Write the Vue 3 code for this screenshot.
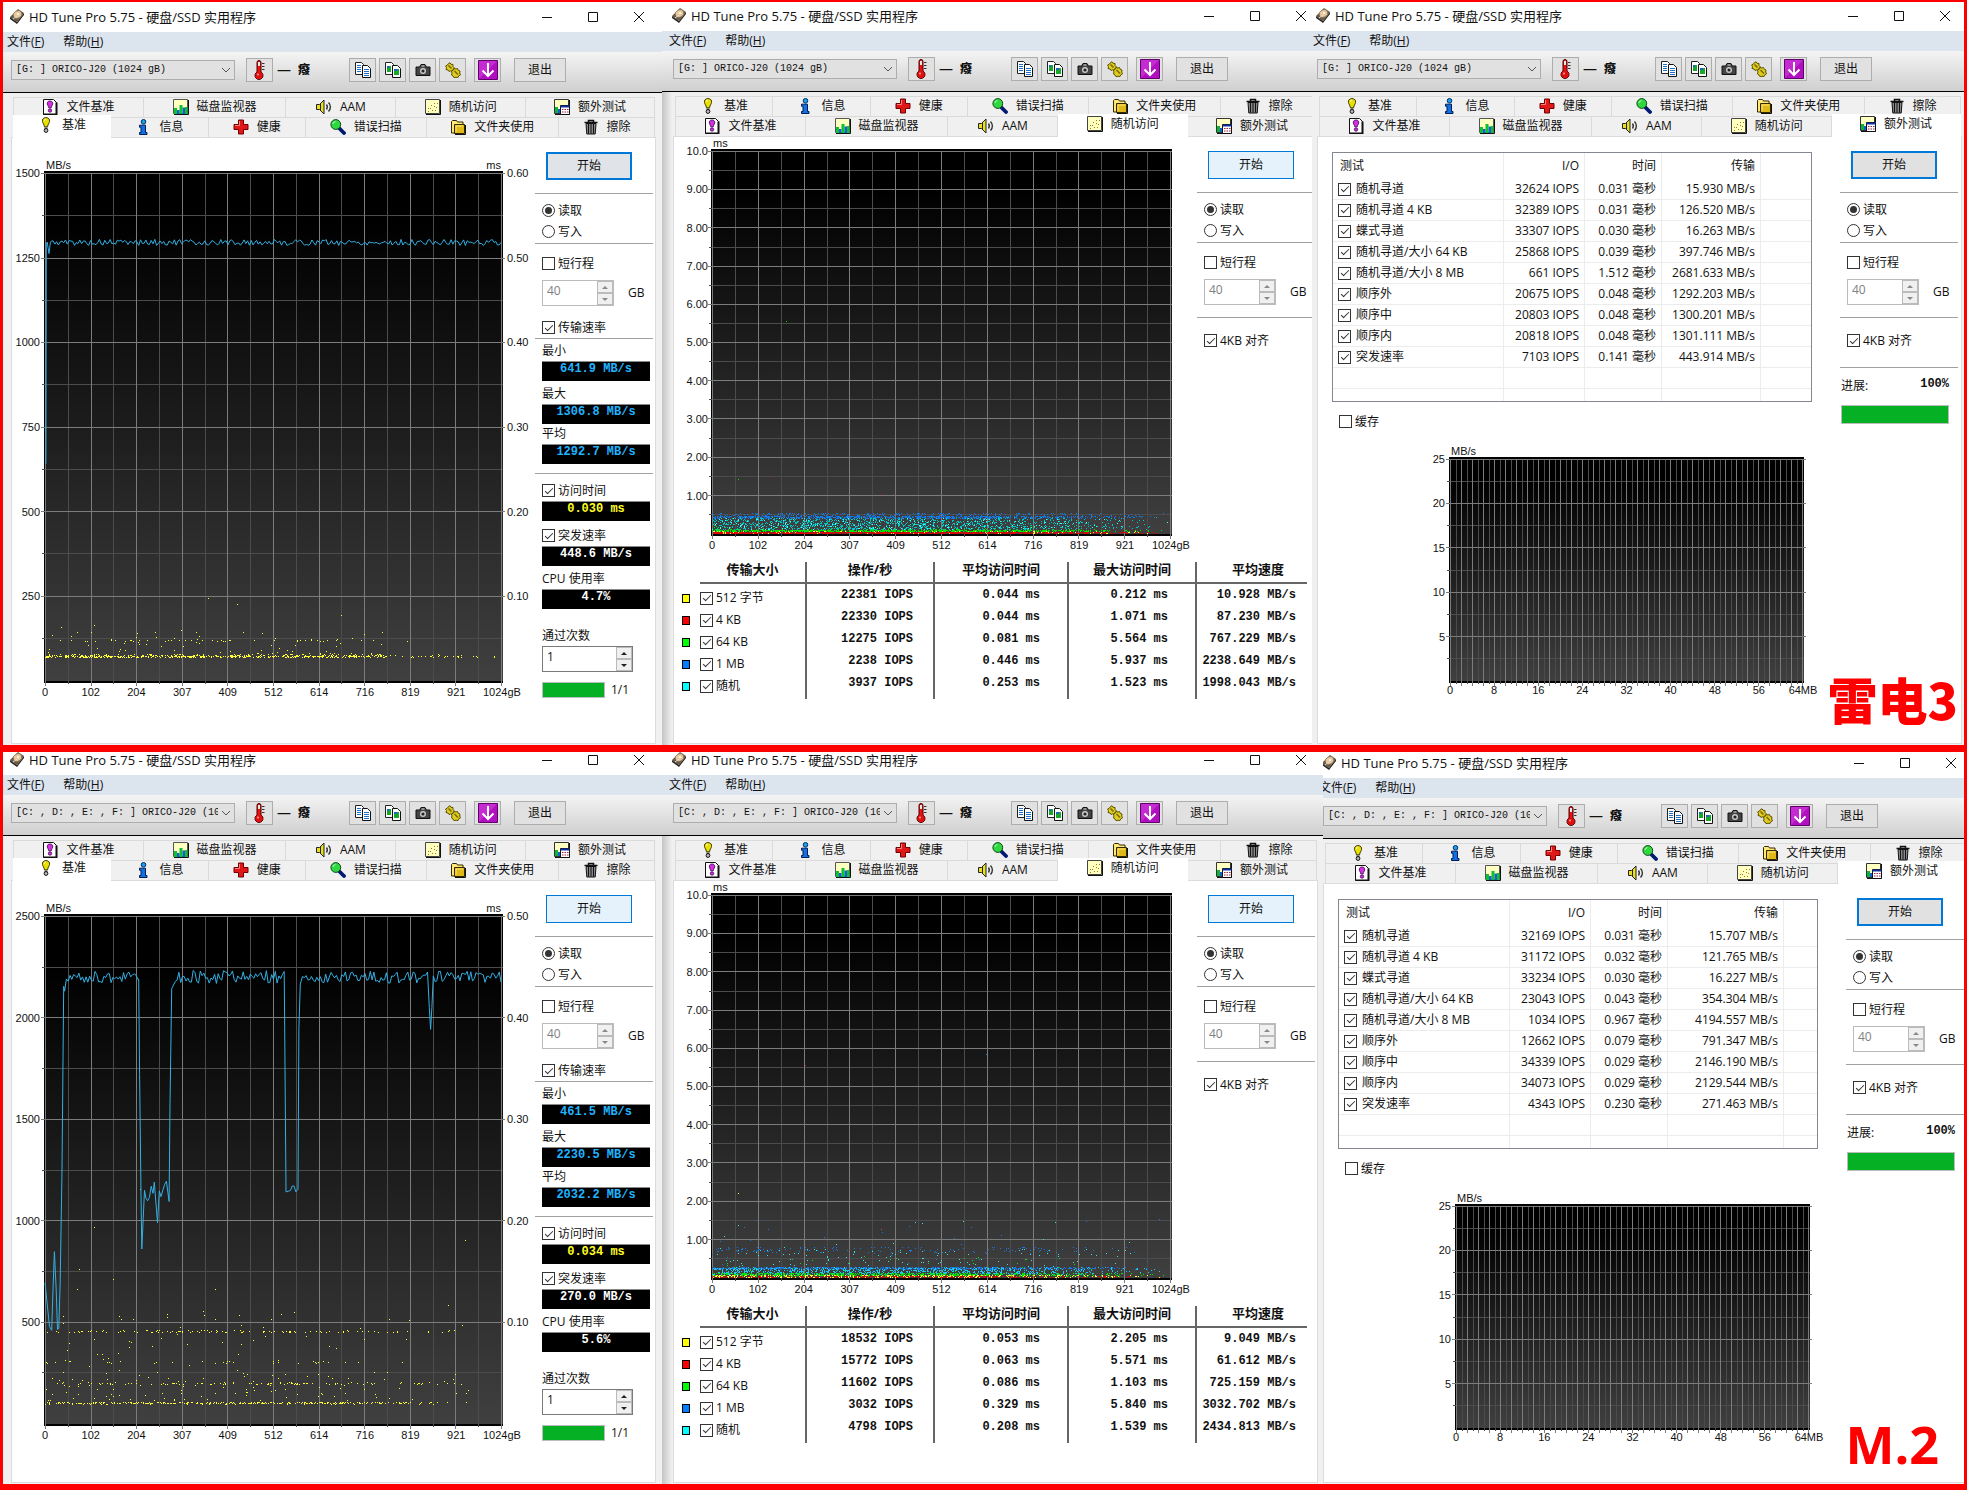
<script setup>
const rng = (seed) => () => {
  seed = (seed + 0x6d2b79f5) | 0
  let t = Math.imul(seed ^ (seed >>> 15), 1 | seed)
  t = (t + Math.imul(t ^ (t >>> 7), 61 | t)) ^ t
  return ((t ^ (t >>> 14)) >>> 0) / 4294967296
}

/* Sample clouds thin out towards the end of the disk. */
function cloud(chart, seed, color, bands) {
  const rand = rng(seed)
  let d = ''
  for (const [count, low, high] of bands) {
    for (let i = 0; i < count; i++) {
      const u = rand()
      const keep = u < 0.6 || rand() < Math.pow((1 - u) / 0.4, 1.2)
      const v = low + rand() * (high - low)
      if (keep) d += mark(chart, u * 1024, v)
    }
  }
  return { color, d }
}

function px(chart, gb, value) {
  return [
    Math.round(1 + (gb / 1024) * (chart.w - 3)),
    Math.round(2 + (1 - value / chart.max) * (chart.h - 4)),
  ]
}
function mark(chart, gb, value) {
  const [x, y] = px(chart, gb, value)
  return `M${x} ${y}h1v1h-1z`
}
function marks(chart, color, list) {
  return { color, d: list.map(([g, v]) => mark(chart, g, v)).join('') }
}

/* A trace is a list of [gB, MB/s] points and [from, to, level, spread] runs. */
function trace(chart, seed, parts) {
  const rand = rng(seed)
  const out = []
  for (const p of parts) {
    if (p.length === 2) out.push(p)
    else for (let g = p[0]; g < p[1]; g += 4) out.push([g, p[2] + (rand() - 0.5) * 2 * p[3]])
  }
  return out
    .map(([g, v]) => {
      const x = 1 + (g / 1024) * (chart.w - 2)
      const y = 2 + (1 - v / chart.max) * (chart.h - 4)
      return `${x.toFixed(1)},${y.toFixed(1)}`
    })
    .join(' ')
}

function grid(chart) {
  const at = (i, n, from, to) => Math.round(from + (i / n) * (to - from)) + 0.5
  let major = ''
  let minor = ''
  for (let i = 0; i <= chart.cols * 2; i++) {
    const x = at(i, chart.cols * 2, 1, chart.w - 2)
    if (i % 2) minor += `M${x} 2V${chart.h + 1}`
    else major += `M${x} 2V${chart.h + 3}`
  }
  for (let i = 0; i < chart.rows * 2; i++) {
    const y = at(i, chart.rows * 2, 2, chart.h - 3)
    const right = chart.right ? chart.w + 2 : chart.w
    if (i % 2) minor += `M-2 ${y}H${chart.w}`
    else major += `M-3 ${y}H${right}`
  }
  return { major, minor }
}

const gbTicks = ['0', '102', '204', '307', '409', '512', '614', '716', '819', '921', '1024gB']

function benchChart(max, left, right, seed) {
  const chart = { w: 459, h: 512, max, cols: 10, rows: left.length - 1, unit: 'MB/s', rightUnit: 'ms', left, right, ticks: gbTicks }
  chart.grid = grid(chart)
  if (seed === 1) {
    chart.line = trace(chart, 5, [[0, 642], [2, 642], [3, 1290], [5, 1296], [9, 1262], [12, 1296], [14, 1024, 1295, 9]])
    chart.clouds = [
      cloud(chart, 11, '#ffff33', [[640, 71, 76], [120, 76, 82], [50, 118, 123], [70, 85, 145]]),
      marks(chart, '#ffff33', [[367, 246], [432, 227], [665, 195], [37, 160], [110, 166], [306, 150], [716, 138]]),
    ]
  } else {
    chart.line = trace(chart, 8, [
      [0, 695], [5, 590], [10, 480], [15, 461], [18, 660], [21, 848], [25, 660], [28, 466], [31, 470], [34, 700],
      [38, 1250], [42, 2154], [44, 2130], [48, 2190], [52, 209, 2200, 30], [210, 2190], [212, 1720], [215, 1130], [217, 861],
      [220, 1010], [223, 1150], [226, 244, 1130, 40], [245, 1190], [252, 990], [256, 274, 1155, 40], [278, 1095],
      [280, 1577], [284, 2142], [292, 2178], [296, 534, 2200, 32], [536, 2227], [537, 1950], [540, 1142], [542, 565, 1160, 22],
      [567, 1155], [569, 1950], [572, 2166], [577, 858, 2200, 30], [861, 2050], [864, 1942], [867, 2050], [870, 1024, 2200, 30],
    ])
    chart.clouds = [
      cloud(chart, 21, '#ffff33', [[420, 100, 110], [110, 195, 205], [130, 452, 462], [45, 298, 312], [150, 115, 260], [70, 260, 560]]),
      marks(chart, '#ffff33', [[109, 968], [77, 765], [153, 712], [382, 662], [944, 905], [213, 1157], [905, 588], [560, 553], [72, 662]]),
    ]
  }
  return chart
}

function accessChart(seed) {
  const chart = {
    w: 461, h: 387, max: 10, cols: 10, rows: 10, unit: 'ms', ticks: gbTicks,
    left: ['10.0', '9.00', '8.00', '7.00', '6.00', '5.00', '4.00', '3.00', '2.00', '1.00', ''],
  }
  chart.grid = grid(chart)
  chart.clouds =
    seed === 1
      ? [
          cloud(chart, 31, '#00c8c8', [[1700, 0.12, 0.44]]),
          cloud(chart, 32, '#40ffff', [[300, 0.12, 0.42]]),
          cloud(chart, 33, '#1478e6', [[1000, 0.42, 0.48], [340, 0.48, 0.56]]),
          cloud(chart, 34, '#00e600', [[1200, 0.07, 0.12], [30, 0.12, 0.2]]),
          cloud(chart, 35, '#ffff33', [[300, 0.02, 0.08]]),
          cloud(chart, 36, '#e60000', [[1300, 0.02, 0.06]]),
          marks(chart, '#00e600', [[58, 1.43], [165, 5.55]]),
          marks(chart, '#e60000', [[378, 1.08], [137, 1.5]]),
        ]
      : [
          cloud(chart, 41, '#1478e6', [[900, 0.24, 0.29], [170, 0.68, 0.82], [40, 0.3, 1.6]]),
          cloud(chart, 42, '#22c8f0', [[1300, 0.1, 0.28]]),
          cloud(chart, 43, '#40e0e0', [[150, 0.28, 0.75], [30, 0.6, 1.5]]),
          cloud(chart, 44, '#00e600', [[1000, 0.06, 0.14], [40, 0.14, 0.6]]),
          cloud(chart, 45, '#ffff33', [[600, 0.02, 0.09]]),
          cloud(chart, 46, '#e60000', [[420, 0.02, 0.06]]),
          marks(chart, '#ffff33', [[58, 2.22]]),
          marks(chart, '#e60000', [[208, 5.57], [378, 1.3]]),
          marks(chart, '#1478e6', [[612, 5.84], [1000, 1.54]]),
        ]
  return chart
}

function cacheChart() {
  const chart = {
    w: 355, h: 226, max: 25, cols: 32, rows: 5, unit: 'MB/s', right: true,
    left: ['25', '20', '15', '10', '5', ''],
    ticks: ['0', '8', '16', '24', '32', '40', '48', '56', '64MB'],
  }
  chart.grid = grid(chart)
  return chart
}

const fileTabs = [
  { icon: 'filebench', text: '文件基准', size: 130 },
  { icon: 'monitor', text: '磁盘监视器', size: 143 },
  { icon: 'speaker', text: 'AAM', size: 110 },
  { icon: 'random', text: '随机访问', size: 130 },
  { icon: 'extra', text: '额外测试', size: 129 },
]
const baseTabs = [
  { icon: 'bulb', text: '基准', size: 97 },
  { icon: 'info', text: '信息', size: 98 },
  { icon: 'health', text: '健康', size: 97 },
  { icon: 'scan', text: '错误扫描', size: 121 },
  { icon: 'folder', text: '文件夹使用', size: 133 },
  { icon: 'trash', text: '擦除', size: 96 },
]

const tools = [
  { icon: 'copy', text: '复制文本' },
  { icon: 'copyimg', text: '复制截图' },
  { icon: 'camera', text: '保存截图' },
  { icon: 'options', text: '选项' },
]

const sizes = [
  ['512 字节', '#ffff00'],
  ['4 KB', '#ff0000'],
  ['64 KB', '#00ff00'],
  ['1 MB', '#0080ff'],
  ['随机', '#00ffff'],
]
const tests = ['随机寻道', '随机寻道 4 KB', '蝶式寻道', '随机寻道/大小 64 KB', '随机寻道/大小 8 MB', '顺序外', '顺序中', '顺序内', '突发速率']

const bench = (id, drive, start, chart, v) => ({
  id, drive, start, chart, kind: 'bench', tabs: [fileTabs, baseTabs], active: '基准',
  rates: [['最小', v[0]], ['最大', v[1]], ['平均', v[2]]],
  access: v[3], burst: v[4], cpu: v[5],
})
const access = (id, drive, chart, rows) => ({
  id, drive, start: 'hover', chart, kind: 'access', tabs: [baseTabs, fileTabs], active: '随机访问', rows,
})
const extra = (id, drive, rows) => ({
  id, drive, start: 'focus', chart: cacheChart(), kind: 'extra', tabs: [baseTabs, fileTabs], active: '额外测试', rows,
})

const driveG = '[G: ] ORICO-J20 (1024 gB)'
const driveC = '[C: , D: , E: , F: ] ORICO-J20 (1024 gB)'

const strips = [
  {
    id: 'thunderbolt',
    caption: '雷电3',
    windows: [
      bench('tb-bench', driveG, 'pressed',
        benchChart(1500, ['1500', '1250', '1000', '750', '500', '250', ''], ['0.60', '0.50', '0.40', '0.30', '0.20', '0.10', ''], 1),
        ['641.9 MB/s', '1306.8 MB/s', '1292.7 MB/s', '0.030 ms', '448.6 MB/s', '4.7%']),
      access('tb-access', driveG, accessChart(1), [
        ['22381 IOPS', '0.044 ms', '0.212 ms', '10.928 MB/s'],
        ['22330 IOPS', '0.044 ms', '1.071 ms', '87.230 MB/s'],
        ['12275 IOPS', '0.081 ms', '5.564 ms', '767.229 MB/s'],
        ['2238 IOPS', '0.446 ms', '5.937 ms', '2238.649 MB/s'],
        ['3937 IOPS', '0.253 ms', '1.523 ms', '1998.043 MB/s'],
      ]),
      extra('tb-extra', driveG, [
        ['32624', '0.031', '15.930'], ['32389', '0.031', '126.520'], ['33307', '0.030', '16.263'],
        ['25868', '0.039', '397.746'], ['661', '1.512', '2681.633'], ['20675', '0.048', '1292.203'],
        ['20803', '0.048', '1300.201'], ['20818', '0.048', '1301.111'], ['7103', '0.141', '443.914'],
      ]),
    ],
  },
  {
    id: 'm2',
    caption: 'M.2',
    windows: [
      bench('m2-bench', driveC, 'hover',
        benchChart(2500, ['2500', '2000', '1500', '1000', '500', ''], ['0.50', '0.40', '0.30', '0.20', '0.10', ''], 2),
        ['461.5 MB/s', '2230.5 MB/s', '2032.2 MB/s', '0.034 ms', '270.0 MB/s', '5.6%']),
      access('m2-access', driveC, accessChart(2), [
        ['18532 IOPS', '0.053 ms', '2.205 ms', '9.049 MB/s'],
        ['15772 IOPS', '0.063 ms', '5.571 ms', '61.612 MB/s'],
        ['11602 IOPS', '0.086 ms', '1.103 ms', '725.159 MB/s'],
        ['3032 IOPS', '0.329 ms', '5.840 ms', '3032.702 MB/s'],
        ['4798 IOPS', '0.208 ms', '1.539 ms', '2434.813 MB/s'],
      ]),
      extra('m2-extra', driveC, [
        ['32169', '0.031', '15.707'], ['31172', '0.032', '121.765'], ['33234', '0.030', '16.227'],
        ['23043', '0.043', '354.304'], ['1034', '0.967', '4194.557'], ['12662', '0.079', '791.347'],
        ['34339', '0.029', '2146.190'], ['34073', '0.029', '2129.544'], ['4343', '0.230', '271.463'],
      ]),
    ],
  },
]
</script>

<template>
  <svg class="sprite" width="0" height="0" aria-hidden="true">
    <symbol id="i-disk" viewBox="0 0 16 16">
      <path d="M1 9 9 1l6 4-7 9z" fill="#6b5a48" />
      <path d="M1 9v2l7 5v-2zM8 14v2l7-9V5z" fill="#2a2622" />
      <ellipse cx="8.500" cy="6.500" rx="4.300" ry="3.600" fill="#e6c9a0" stroke="#8a6a44" stroke-width=".6" transform="rotate(-25 8.500 6.500)" />
      <circle cx="9" cy="6" r="1" fill="#fff" />
      <path d="m4 11 4-3" stroke="#ddd" />
    </symbol>
    <symbol id="i-bulb" viewBox="0 0 16 16">
      <path d="M8 .6c-2.600 0-4 1.700-3.500 4C4.800 6.500 6.200 7 6.400 9.800h3.200c.2-2.800 1.600-3.300 1.900-5.200C12 2.300 10.600.6 8 .6z" fill="#e8e000" stroke="#3c3a00" />
      <path d="M6.500 3.700c0-1 .6-1.600 1.300-1.800" stroke="#fff" fill="none" />
      <path d="M6.500 10.500h3v1.500h-3z" fill="#444" />
      <circle cx="8" cy="13.500" r="1.900" fill="#bbb" stroke="#111" />
    </symbol>
    <symbol id="i-info" viewBox="0 0 16 16">
      <circle cx="8.500" cy="2.800" r="2.300" fill="#18a0f0" stroke="#002a60" />
      <path d="M4.500 6.200H10.500v7.300H12v2H4.500v-2H6V8.200H4.500z" fill="#1070e8" stroke="#001c50" />
    </symbol>
    <symbol id="i-health" viewBox="0 0 16 16">
      <path d="M5.500 1h5v4.500H15v5h-4.500V15h-5v-4.500H1v-5h4.500z" fill="#e01818" stroke="#700000" />
      <path d="M6.500 2v4.500H2" stroke="#ff8080" fill="none" />
    </symbol>
    <symbol id="i-scan" viewBox="0 0 16 16">
      <path d="m9 9 5 5" stroke="#001a70" stroke-width="3.800" stroke-linecap="round" />
      <circle cx="5.800" cy="5.500" r="4.900" fill="#30d840" stroke="#104818" />
      <path d="M3 5c.2-1.400 1.200-2.200 2.400-2.300" stroke="#d0ffd0" fill="none" />
    </symbol>
    <symbol id="i-folder" viewBox="0 0 16 16">
      <path d="M1.500 14V2.500l1-1h4l1 1.500h5.500V14z" fill="#ffe878" stroke="#302800" />
      <path d="M4.500 14.500v-9h10v9z" fill="#e0b818" stroke="#302800" />
      <path d="M6 13V7h7" stroke="#ffe878" fill="none" />
      <path d="M15.500 6v9.500H5" stroke="#111" fill="none" />
    </symbol>
    <symbol id="i-trash" viewBox="0 0 16 16">
      <path d="M1.500 3.500h13M5.500 3V1.500h5V3" stroke="#111" stroke-width="1.500" fill="none" />
      <path d="M3 4.500h10l-.8 10.500H3.800z" fill="#888" stroke="#111" />
      <path d="M5.500 5v9.500M8 5v9.500M10.500 5v9.500" stroke="#111" />
    </symbol>
    <symbol id="i-filebench" viewBox="0 0 16 16">
      <path d="M1.500.5h10l3 3v12h-13z" fill="#fff" stroke="#111" />
      <path d="M14.500 3.500v12h-13" stroke="#111" stroke-width="2" fill="none" />
      <path d="M8 2C6 2 5 3.300 5.300 5c.2 1.400 1.300 2 1.400 3.800h2.600C9.400 7 10.500 6.400 10.700 5 11 3.300 10 2 8 2z" fill="#d030e0" stroke="#400050" stroke-width=".8" />
      <circle cx="8" cy="11.500" r="1.700" fill="#d030e0" stroke="#400050" stroke-width=".8" />
    </symbol>
    <symbol id="i-monitor" viewBox="0 0 16 16">
      <path d="M.5.5h14v14H.5z" fill="#ffffc0" stroke="#555" />
      <path d="M15.500 1v14.500H1" stroke="#111" fill="none" />
      <path d="M1 9h3v6H1zM6.500 6h3v9h-3zM12 8h2.500v7H12z" fill="#10c030" />
      <path d="M4 11h2.500v4H4zM9.500 8.500H12V15H9.500z" fill="#1060d0" />
    </symbol>
    <symbol id="i-speaker" viewBox="0 0 16 16">
      <path d="M.5 5.500h3l4.500-4.500v14l-4.500-4.500h-3z" fill="#e8e020" stroke="#222" />
      <path d="M4.500 5v6" stroke="#222" />
      <path d="M10.500 5.500c1 1.500 1 3.500 0 5M12.500 3.500c2.500 2.500 2.500 6.500 0 9" stroke="#333" stroke-width="1.400" fill="none" />
    </symbol>
    <symbol id="i-random" viewBox="0 0 16 16">
      <path d="M.5.5h14v14H.5z" fill="#ffffc0" stroke="#444" />
      <path d="M15.500 1v14.500H1" stroke="#111" fill="none" />
      <path d="M3 12h1v1H3zM5 9h1v1H5zM7 11h1v1H7zM9 7h1v1H9zM11 8h1v1h-1zM12 4h1v1h-1zM6 6h1v1H6zM3 9h1v1H3zM10 11h1v1h-1zM9 4h1v1H9z" fill="#a07818" />
    </symbol>
    <symbol id="i-extra" viewBox="0 0 16 16">
      <path d="M.5.5h14v14H.5z" fill="#ffffc0" stroke="#333" />
      <path d="M15.500 1v14.500H1" stroke="#111" fill="none" />
      <path d="M1 8h3v6H1z" fill="#10b040" />
      <path d="M4 10h2v4H4z" fill="#1060d0" />
      <path d="M6.500 6.500h9v9h-9z" fill="#fff" stroke="#111" />
      <path d="M6.500 7.500h9" stroke="#1030a0" stroke-width="2" />
      <path d="M8 10h1.500v1H8zM10.500 10H12v1h-1.500zM13 10h1.500v1H13zM8 12.500h1.500v1H8zM10.500 12.500H12v1h-1.500zM13 12.500h1.500v1H13z" fill="#a02040" />
    </symbol>
    <symbol id="i-thermo" viewBox="0 0 16 20">
      <path d="M6 2.500a2 2 0 0 1 4 0V12a4 4 0 1 1-4 0z" fill="#f01010" stroke="#400" />
      <path d="M7 2h2v4H7z" fill="#e8e8e8" />
      <circle cx="8" cy="15.500" r="3.400" fill="#e01010" />
      <circle cx="7" cy="14.500" r="1" fill="#ffa0a0" />
      <path d="M11 3.500h2.500M11 6.500h2.500M11 9.500h2.500" stroke="#333" />
    </symbol>
    <symbol id="i-copy" viewBox="0 0 16 16">
      <path d="M.5.5h6l2 2v10h-8z" fill="#fff" stroke="#222" />
      <path d="M7.500 3.500h5l3 3v9h-8z" fill="#fff" stroke="#111" />
      <path d="M2 3.500h4M2 5.500h4M2 7.500h4M2 9.500h4M9 7.500h5M9 9.500h5M9 11.500h5M9 13.500h5" stroke="#2070c8" />
    </symbol>
    <symbol id="i-copyimg" viewBox="0 0 16 16">
      <path d="M.5.5h6l2 2v10h-8z" fill="#fff" stroke="#222" />
      <path d="M7.500 3.500h5l3 3v9h-8z" fill="#fff" stroke="#111" />
      <path d="M2 4h4v6H2zM9 7h5v6H9z" fill="#18a828" />
      <path d="M2 4h2v2H2zM9 7h3v2H9z" fill="#2060d0" />
    </symbol>
    <symbol id="i-camera" viewBox="0 0 16 16">
      <path d="M1 5h3.500L6 2.500h4L11.500 5H15v8.500H1z" fill="#444" stroke="#111" />
      <path d="M6.500 3.500h3v1h-3z" fill="#ddd" />
      <circle cx="8" cy="9" r="3" fill="#ccc" />
      <circle cx="8" cy="9" r="1.600" fill="#222" />
    </symbol>
    <symbol id="i-options" viewBox="0 0 16 16">
      <path d="M3.500 1.500 5 .8l1 1.500 2 .2v2l1.500 1.500L8 7.500l-.5 1.800-1.800-.5L4 9.500 3 8 1 7.500l.5-2L.6 4 2.500 3z" fill="#e0cc20" stroke="#5a5000" />
      <path d="m9 6.500 2 .5 1.500-.5.8 1.800 1.700.7-.3 2 .8 1.800-1.700 1-.8 1.700-2-.3-2 .5-1-1.700-1.500-1L7 11l-.5-2 1.800-.8z" fill="#e0cc20" stroke="#5a5000" />
      <path d="m3.500 3.500 3 3M9.500 9l3.500 3.500" stroke="#7a6e00" stroke-width="1.600" />
    </symbol>
    <symbol id="i-down" viewBox="0 0 20 20">
      <path d="M.5.500h19v19H.5z" fill="#b010c0" stroke="#600068" />
      <path d="M1 1h18L1 19z" fill="#d848e4" opacity=".5" />
      <path d="M10 3v13M4.500 10.500 10 16l5.500-5.500" stroke="#fff" stroke-width="2" fill="none" />
    </symbol>
  </svg>

  <main class="board">
    <section v-for="strip in strips" :key="strip.id" class="strip" :class="strip.id">
      <article v-for="win in strip.windows" :key="win.id" class="cell" :class="win.id">
        <div class="frame" :class="win.kind">
          <header class="titlebar">
            <svg class="ico"><use href="#i-disk" /></svg>
            <h1>HD Tune Pro 5.75 - 硬盘/SSD 实用程序</h1>
            <div class="caption-buttons">
              <button type="button" aria-label="最小化"><svg viewBox="0 0 12 12"><path d="M1 6.500h10" /></svg></button>
              <button type="button" aria-label="最大化"><svg viewBox="0 0 12 12"><path d="M1.500 1.500h9v9h-9z" /></svg></button>
              <button type="button" aria-label="关闭"><svg viewBox="0 0 12 12"><path d="m1 1 10 10M11 1 1 11" /></svg></button>
            </div>
          </header>

          <nav class="menubar">
            <a href="#file">文件(<u>F</u>)</a>
            <a href="#help">帮助(<u>H</u>)</a>
          </nav>

          <div class="toolbar">
            <div class="drive">
              <select aria-label="驱动器"><option>{{ win.drive }}</option></select>
              <svg viewBox="0 0 10 6"><path d="m1 1 4 4 4-4" /></svg>
            </div>
            <button type="button" class="tool thermo" aria-label="温度"><svg><use href="#i-thermo" /></svg></button>
            <span class="dash">—</span>
            <b class="degree">癈</b>
            <div class="tools">
              <button v-for="t in tools" :key="t.icon" type="button" class="tool" :aria-label="t.text">
                <svg><use :href="'#i-' + t.icon" /></svg>
              </button>
            </div>
            <button type="button" class="tool save" aria-label="保存"><svg><use href="#i-down" /></svg></button>
            <button type="button" class="exit">退出</button>
          </div>

          <div class="body">
            <div class="tabs">
              <div v-for="(row, r) in win.tabs" :key="r" class="tab-row" role="tablist">
                <button
                  v-for="tab in row"
                  :key="tab.text"
                  type="button"
                  role="tab"
                  class="tab"
                  :class="{ active: tab.text === win.active }"
                  :aria-selected="tab.text === win.active"
                  :style="{ flexGrow: tab.size }"
                >
                  <svg class="ico"><use :href="'#i-' + tab.icon" /></svg>
                  <span>{{ tab.text }}</span>
                </button>
              </div>
            </div>

            <div class="page">
              <div class="split">
                <div class="content">
                  <template v-if="win.kind === 'extra'">
                    <table class="tests">
                      <thead>
                        <tr><th>测试</th><th>I/O</th><th>时间</th><th>传输</th><th></th></tr>
                      </thead>
                      <tbody>
                        <tr v-for="(row, i) in win.rows" :key="i">
                          <td><label class="check"><input type="checkbox" checked />{{ tests[i] }}</label></td>
                          <td>{{ row[0] }} IOPS</td>
                          <td>{{ row[1] }} 毫秒</td>
                          <td>{{ row[2] }} MB/s</td>
                          <td></td>
                        </tr>
                        <tr class="blank"><td></td><td></td><td></td><td></td><td></td></tr>
                        <tr class="blank last"><td></td><td></td><td></td><td></td><td></td></tr>
                      </tbody>
                    </table>
                    <label class="check cache"><input type="checkbox" />缓存</label>
                  </template>

                  <figure class="chart">
                    <div class="units"><span>{{ win.chart.unit }}</span><span>{{ win.chart.rightUnit }}</span></div>
                    <div class="scale left"><span v-for="(t, i) in win.chart.left" :key="i">{{ t }}</span></div>
                    <svg class="plot" :viewBox="`0 0 ${win.chart.w} ${win.chart.h}`" preserveAspectRatio="none">
                      <path class="edge" :d="`M0 1H${win.chart.w}M1 0V${win.chart.h}M0 ${win.chart.h - 1}H${win.chart.w}`" />
                      <path class="minor" :d="win.chart.grid.minor" />
                      <path class="major" :d="win.chart.grid.major" />
                      <path v-for="(c, i) in win.chart.clouds" :key="i" :d="c.d" :fill="c.color" class="cloud" />
                      <polyline v-if="win.chart.line" :points="win.chart.line" class="rate" />
                    </svg>
                    <div v-if="win.kind === 'bench'" class="scale right">
                      <span v-for="(t, i) in win.chart.right" :key="i">{{ t }}</span>
                    </div>
                    <div class="ticks"><span v-for="t in win.chart.ticks" :key="t">{{ t }}</span></div>
                  </figure>
                </div>

                <aside class="side">
                  <button type="button" class="start" :class="win.start">开始</button>
                  <hr />
                  <div class="modes">
                    <label class="check"><input type="radio" :name="win.id" checked />读取</label>
                    <label class="check"><input type="radio" :name="win.id" />写入</label>
                  </div>
                  <hr />
                  <label class="check stroke"><input type="checkbox" />短行程</label>
                  <div class="size">
                    <div class="spin off">
                      <input type="number" value="40" disabled aria-label="短行程大小" />
                      <span class="arrows"><button type="button" disabled aria-label="增加"></button><button type="button" disabled aria-label="减少"></button></span>
                    </div>
                    <span>GB</span>
                  </div>

                  <template v-if="win.kind === 'bench'">
                    <label class="check rate-check"><input type="checkbox" checked />传输速率</label>
                    <hr />
                    <dl class="rates">
                      <template v-for="r in win.rates" :key="r[0]">
                        <dt>{{ r[0] }}</dt>
                        <dd class="lcd blue">{{ r[1] }}</dd>
                      </template>
                    </dl>
                    <hr />
                    <label class="check access-check"><input type="checkbox" checked />访问时间</label>
                    <output class="lcd yellow">{{ win.access }}</output>
                    <label class="check burst-check"><input type="checkbox" checked />突发速率</label>
                    <output class="lcd">{{ win.burst }}</output>
                    <p class="cpu">CPU 使用率</p>
                    <output class="lcd">{{ win.cpu }}</output>
                    <label class="passes" :for="win.id + '-passes'">通过次数</label>
                    <div class="spin wide">
                      <input :id="win.id + '-passes'" type="number" value="1" />
                      <span class="arrows"><button type="button" aria-label="增加"></button><button type="button" aria-label="减少"></button></span>
                    </div>
                    <div class="done"><i class="bar"></i><span>1/1</span></div>
                  </template>

                  <template v-else>
                    <hr class="gap" />
                    <label class="check align"><input type="checkbox" checked />4KB 对齐</label>
                  </template>

                  <template v-if="win.kind === 'extra'">
                    <hr class="gap-wide" />
                    <div class="progress-head"><span>进展:</span><b>100%</b></div>
                    <i class="bar full"></i>
                  </template>
                </aside>
              </div>

              <table v-if="win.kind === 'access'" class="results">
                <thead>
                  <tr><th class="swatch"></th><th>传输大小</th><th>操作/秒</th><th>平均访问时间</th><th>最大访问时间</th><th>平均速度</th></tr>
                </thead>
                <tbody>
                  <tr v-for="(row, i) in win.rows" :key="i">
                    <td class="swatch"><i :style="{ background: sizes[i][1] }"></i></td>
                    <td><label class="check"><input type="checkbox" checked />{{ sizes[i][0] }}</label></td>
                    <td v-for="(v, j) in row" :key="j">{{ v }}</td>
                  </tr>
                </tbody>
              </table>
            </div>
          </div>
        </div>
      </article>
      <strong class="caption">{{ strip.caption }}</strong>
    </section>
  </main>
</template>

<style>
body {
  margin: 0;
}
</style>

<style scoped>
.sprite {
  position: absolute;
}
.board {
  display: grid;
  grid-template-rows: 743fr 732fr;
  gap: 7px;
  box-sizing: border-box;
  min-height: 100vh;
  padding: 2px 3px 6px;
  background: #ff0000;
  color: #111;
  font: 12px/20px "Open Sans", "Noto Sans CJK SC", sans-serif;
}
.strip {
  position: relative;
  display: grid;
}
.thunderbolt {
  grid-template-columns: 659fr 650fr 652fr;
}
.m2 {
  grid-template-columns: 659fr 661fr 641fr;
}
.caption {
  position: absolute;
  right: 6px;
  bottom: 11px;
  color: #ff0000;
  font: 900 50px/72px "Noto Sans CJK SC", sans-serif;
}
.m2 .caption {
  right: 25px;
  bottom: 4px;
  font-family: "Open Sans", sans-serif;
  font-size: 52px;
  font-weight: bold;
}
.cell {
  display: flex;
  min-width: 0;
  overflow: hidden;
  background: #f0f0f0;
}
.frame {
  flex: 1;
  display: flex;
  flex-direction: column;
  min-width: 0;
}
.tb-bench .frame,
.m2-bench .frame {
  margin-left: -3px;
}
.tb-access .frame {
  margin-right: -12px;
}
.m2-access .frame {
  margin-right: -1px;
}
.tb-extra .frame {
  margin: 0 -4px 0 -6px;
}
.m2-extra .frame {
  margin: 0 -10px 0 -11px;
}
button,
input,
select {
  margin: 0;
  padding: 0;
  color: inherit;
  font: inherit;
}
.ico {
  flex: none;
  width: 16px;
  height: 16px;
}

/* window chrome */
.titlebar {
  display: flex;
  align-items: flex-end;
  box-sizing: border-box;
  height: 29px;
  padding: 0 0 8px 9px;
  background: #fff;
}
.tb-bench .titlebar {
  height: 30px;
}
.m2-bench .titlebar,
.m2-access .titlebar {
  height: 23px;
}
.m2-extra .titlebar {
  height: 26px;
}
.titlebar .ico {
  margin-right: 4px;
}
.titlebar h1 {
  margin: 0;
  font-size: 13px;
  font-weight: normal;
  line-height: 14px;
  white-space: nowrap;
}
.caption-buttons {
  display: flex;
  margin-left: auto;
}
.caption-buttons button {
  display: grid;
  place-items: center;
  width: 46px;
  height: 15px;
  border: 0;
  background: none;
}
.caption-buttons svg {
  width: 12px;
  height: 12px;
  fill: none;
  stroke: #111;
}
.menubar {
  display: flex;
  gap: 19px;
  height: 20px;
  padding-left: 7px;
  background: #dce4ee;
}
.menubar a {
  color: inherit;
  text-decoration: none;
}
.toolbar {
  display: flex;
  align-items: center;
  box-sizing: border-box;
  height: 41px;
  padding: 0 96px 4px 11px;
  border-bottom: 1px solid #000;
  background: linear-gradient(#f4f4f4, #cfcfcf);
}
.drive {
  position: relative;
  flex: 1;
  height: 20px;
}
.drive select {
  display: block;
  width: 100%;
  height: 20px;
  padding: 0 16px 0 4px;
  border: 1px solid #adadad;
  border-radius: 0;
  appearance: none;
  background: #e1e1e1;
  font: 10px/18px "Liberation Mono", monospace;
  text-overflow: clip;
}
.drive svg {
  position: absolute;
  top: 7px;
  right: 4px;
  width: 10px;
  height: 6px;
  fill: none;
  stroke: #555;
  pointer-events: none;
}
.tool {
  display: grid;
  place-items: center;
  flex: none;
  width: 27px;
  height: 24px;
  border: 1px solid #adadad;
  background: #e1e1e1;
}
.tool svg {
  width: 16px;
  height: 16px;
}
.thermo {
  margin-left: 11px;
}
.thermo svg {
  width: 16px;
  height: 20px;
}
.dash {
  width: 14px;
  margin-left: 4px;
  font-size: 14px;
}
.degree {
  margin-left: 7px;
  font-weight: 900;
}
.tools {
  display: flex;
  gap: 3px;
  margin-left: 39px;
}
.save {
  margin-left: 8px;
}
.save svg {
  width: 20px;
  height: 20px;
}
.exit {
  flex: none;
  width: 52px;
  height: 24px;
  margin-left: 13px;
  border: 1px solid #adadad;
  background: #e1e1e1;
}

/* tabs */
.body {
  flex: 1;
  display: flex;
  flex-direction: column;
  padding: 4px 6px 1px 11px;
}
.access .body {
  background: linear-gradient(90deg, #c4c4c4, #f0f0f0 10px);
}
.tabs {
  padding: 0 1px 0 2px;
}
.tab-row {
  display: flex;
  height: 20px;
}
.tab {
  display: flex;
  align-items: center;
  justify-content: center;
  gap: 8px;
  flex: 1 1 0;
  box-sizing: border-box;
  min-width: 0;
  padding-bottom: 2px;
  border: solid #dadada;
  border-width: 1px 1px 0 0;
  background: #f0f0f0;
  white-space: nowrap;
}
.tab:first-child {
  border-left-width: 1px;
}
.tab.active {
  position: relative;
  height: 23px;
  margin: -2px 0 -1px;
  padding-bottom: 4px;
  border-color: #fff;
  background: #fff;
}
.page {
  flex: 1;
  border: 1px solid #dcdcdc;
  background: #fff;
}
.split {
  display: flex;
}
.content {
  flex: 1;
  min-width: 0;
}

/* charts */
.chart {
  display: grid;
  grid-template-columns: 32px 1fr 32px;
  grid-template-rows: 12px auto 16px;
  margin: 0;
  font: 11px/12px "Liberation Sans", Arial, sans-serif;
}
.bench .chart {
  padding-top: 21px;
}
.access .chart {
  grid-template-columns: 37px 1fr 25px;
}
.extra .chart {
  grid-template-columns: 32px 1fr 36px;
  margin: 13px 0 0 85px;
}
.units {
  grid-column: 2;
  display: flex;
  justify-content: space-between;
  padding: 0 2px;
}
.plot {
  grid-area: 2 / 2;
  display: block;
  width: 100%;
  height: 512px;
  overflow: visible;
  background: linear-gradient(#000 10%, #404040);
  shape-rendering: crispEdges;
}
.access .plot {
  height: 387px;
}
.extra .plot {
  height: 226px;
}
.plot path {
  stroke-width: 1;
  fill: none;
}
.plot .cloud {
  fill: revert-layer;
}
.plot .edge {
  stroke: #000;
  stroke-width: 2;
}
.plot .minor {
  stroke: #4c4c4c;
}
.plot .major {
  stroke: #7c7c7c;
}
.plot .rate {
  fill: none;
  stroke: #35b0e4;
  stroke-width: 1;
  shape-rendering: auto;
}
.scale {
  grid-area: 2 / 1;
  display: flex;
  flex-direction: column;
  justify-content: space-between;
  padding: 2px 4px;
  text-align: right;
}
.access .scale {
  padding: 2px 3px;
}
.scale span {
  display: flex;
  align-items: center;
  justify-content: flex-end;
  height: 0;
}
.scale.right {
  grid-column: 3;
}
.scale.right span {
  justify-content: flex-start;
}
.ticks {
  grid-area: 3 / 2;
  display: flex;
  justify-content: space-between;
  padding: 3px 1px 0;
}
.extra .ticks {
  padding-top: 1px;
}
.ticks span {
  display: flex;
  justify-content: center;
  width: 0;
}

/* form controls */
.check {
  display: flex;
  align-items: center;
  gap: 3px;
  height: 21px;
  white-space: nowrap;
}
.check input {
  display: grid;
  place-content: center;
  flex: none;
  box-sizing: border-box;
  width: 13px;
  height: 13px;
  border: 1px solid #333;
  appearance: none;
  background: #fff;
}
.check input[type="checkbox"]:checked::before {
  content: "";
  width: 7px;
  height: 3px;
  margin-bottom: 2px;
  border: solid #333;
  border-width: 0 0 1px 1px;
  transform: rotate(-45deg);
}
.check input[type="radio"] {
  border-radius: 50%;
}
.check input[type="radio"]:checked::before {
  content: "";
  width: 7px;
  height: 7px;
  border-radius: 50%;
  background: #333;
}
.side {
  flex: none;
  width: 120px;
}
.extra .side {
  width: 121px;
}
.side hr {
  width: 118px;
  height: 1px;
  margin: 0;
  border: 0;
  background: #a0a0a0;
}
.side > .check,
.side > p,
.passes,
.modes {
  margin-left: 7px;
}
.start {
  display: block;
  width: 86px;
  height: 28px;
  margin: 14px 0 13px 11px;
  border: 1px solid #0078d7;
  background: #e5f1fb;
}
.start.pressed {
  border-width: 2px;
  background: #e0e3e7;
}
.start.focus {
  border-width: 2px;
  background: #e1e1e1;
}
.modes {
  padding: 6px 0 1px;
}
.side > .stroke {
  margin: 9px 0 6px 7px;
}
.size {
  display: flex;
  align-items: center;
  gap: 14px;
  margin-left: 7px;
}
.spin {
  display: flex;
  box-sizing: border-box;
  width: 72px;
  height: 26px;
  border: 1px solid #7a7a7a;
  background: #fff;
}
.spin.off {
  border-color: #bbb;
  color: #808080;
}
.spin.wide {
  width: 91px;
  margin-left: 7px;
}
.spin input {
  flex: 1;
  width: 0;
  min-width: 0;
  padding: 0 0 4px 4px;
  border: 0;
  appearance: textfield;
  background: none;
}
.arrows {
  display: flex;
  flex-direction: column;
  width: 16px;
}
.arrows button {
  display: grid;
  place-content: center;
  flex: 1;
  min-height: 0;
  border: 1px solid #bbb;
  background: #f0f0f0;
}
.arrows button::before {
  content: "";
  border: solid transparent;
  border-width: 0 3px 3px;
  border-bottom-color: #222;
}
.arrows button:last-child::before {
  border-width: 3px 3px 0;
  border-top-color: #222;
}
.off .arrows button::before {
  opacity: 0.5;
}
.side > .rate-check {
  margin-top: 11px;
}
.rates {
  margin: 2px 0 9px;
}
.rates dt {
  height: 20px;
  margin-left: 7px;
}
.rates dt:nth-of-type(2) {
  margin-top: 3px;
}
.lcd {
  display: block;
  box-sizing: border-box;
  width: 108px;
  height: 20px;
  margin: 0 0 0 7px;
  border-top: 1px solid #888;
  background: #000;
  color: #fff;
  font: bold 12px/14px "Liberation Mono", monospace;
  text-align: center;
}
.lcd.blue {
  color: #20b4ff;
}
.lcd.yellow {
  color: #ffff20;
}
.side > .access-check {
  margin-top: 6px;
}
.side > .burst-check {
  margin-top: 4px;
}
.side > .cpu {
  margin-top: 3px;
  margin-bottom: 0;
}
.passes {
  display: block;
  margin-top: 17px;
}
.bar {
  display: block;
  box-sizing: border-box;
  width: 63px;
  height: 16px;
  border: 1px solid #bcbcbc;
  background: #06b025;
}
.bar.full {
  width: 108px;
  height: 19px;
  margin: 9px 0 0 1px;
}
.done {
  display: flex;
  align-items: center;
  gap: 6px;
  margin: 8px 0 0 7px;
}
.side .gap {
  margin: 12px 0;
}
.side .gap-wide {
  margin: 16px 0 8px;
}
.progress-head {
  display: flex;
  justify-content: space-between;
  width: 108px;
  margin-left: 1px;
}
.progress-head b {
  font: bold 12px/16px "Liberation Mono", monospace;
}

/* random access results */
.results {
  width: calc(100% - 18px);
  margin: 10px 10px 0 8px;
  border-collapse: separate;
  border-spacing: 0;
  table-layout: fixed;
}
.results th,
.results td {
  padding: 0;
}
.results th {
  width: 126px;
  height: 20px;
  border-bottom: 2px solid #666;
  font-size: 13px;
  line-height: 14px;
  vertical-align: top;
}
.results th:nth-child(2) {
  width: 105px;
}
.results th:nth-child(4) {
  width: 132px;
}
.results th:last-child {
  width: auto;
  padding-left: 12px;
}
.results th.swatch {
  width: 18px;
  border-bottom-color: transparent;
}
.results td {
  height: 22px;
  padding-right: 27px;
  font: bold 12px/22px "Liberation Mono", monospace;
  text-align: right;
  vertical-align: top;
  white-space: nowrap;
}
.results td:nth-child(3) {
  padding-right: 20px;
}
.results td:last-child {
  padding-right: 11px;
}
.results tr > :nth-child(n + 3) {
  border-left: 2px solid #666;
}
.results td.swatch {
  padding: 0;
}
.swatch i {
  display: block;
  box-sizing: border-box;
  width: 8px;
  height: 9px;
  margin-top: 10px;
  border: 1px solid #000;
}
.results .check {
  height: 14px;
  padding-top: 7px;
  font: 12px/14px "Open Sans", "Noto Sans CJK SC", sans-serif;
}
.results tbody tr:last-child td {
  height: 27px;
}

/* extra tests list */
.extra .content {
  padding: 15px 0 0 14px;
}
.tests {
  width: calc(100% - 28px);
  border: 1px solid #828790;
  border-collapse: separate;
  border-spacing: 0;
  table-layout: fixed;
}
.tests th,
.tests td {
  box-sizing: border-box;
  height: 21px;
  padding: 0 5px 0 0;
  border-right: 1px solid #ececec;
  border-bottom: 1px solid #ececec;
  font-weight: normal;
  line-height: 20px;
  text-align: right;
  white-space: nowrap;
}
.tests th {
  width: 77px;
  height: 26px;
  border-bottom: 0;
}
.tests th:first-child {
  width: 171px;
  padding-left: 7px;
  text-align: left;
}
.tests th:nth-child(2) {
  width: 81px;
}
.tests th:nth-child(4) {
  width: 99px;
}
.m2-extra .tests th:nth-child(4) {
  width: 116px;
}
.tests th:last-child {
  width: auto;
}
.tests tr > :last-child {
  border-right: 0;
}
.tests td:first-child {
  padding-left: 5px;
}
.tests .check {
  gap: 5px;
  height: 20px;
}
.tests .last td {
  height: 12px;
  border-bottom: 0;
}
.cache {
  margin: 9px 0 0 7px;
}
</style>
